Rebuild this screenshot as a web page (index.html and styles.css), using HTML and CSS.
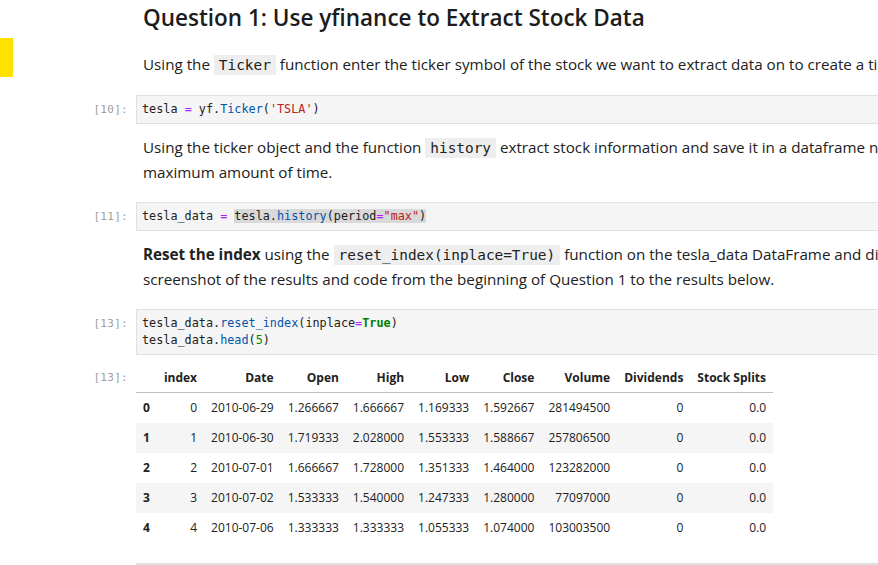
FILE: index.html
```html
<!DOCTYPE html>
<html>
<head>
<meta charset="utf-8">
<link rel="stylesheet" href="styles.css">
</head>
<body>
<div class="notebook">
  <div class="cell md first">
    <div class="gutter"><div class="marker"></div></div>
    <div class="content">
      <h2>Question 1: Use yfinance to Extract Stock Data</h2>
      <p>Using the <code>Ticker</code> function enter the ticker symbol of the stock we want to extract data on to create a ticker object. The stock is Tesla and its ticker symbol is <code>TSLA</code>.</p>
    </div>
  </div>

  <div class="cell code">
    <div class="prompt">[10]:</div>
    <div class="input"><pre>tesla <span class="op">=</span> yf.<span class="pr">Ticker</span>(<span class="st">'TSLA'</span>)</pre></div>
  </div>

  <div class="cell md">
    <div class="gutter"></div>
    <div class="content">
      <p>Using the ticker object and the function <code>history</code> extract stock information and save it in a dataframe named <code>tesla_data</code>. Set the <code>period</code> parameter to <code>max</code> so we get information for the<br>maximum amount of time.</p>
    </div>
  </div>

  <div class="cell code">
    <div class="prompt">[11]:</div>
    <div class="input"><pre>tesla_data <span class="op">=</span> <span class="sel">tesla.<span class="pr">history</span>(period<span class="op">=</span><span class="st">"max"</span>)</span></pre></div>
  </div>

  <div class="cell md">
    <div class="gutter"></div>
    <div class="content">
      <p><strong>Reset the index</strong> using the <code>reset_index(inplace=True)</code> function on the tesla_data DataFrame and display the first five rows of the <code>tesla_data</code> dataframe using the <code>head</code> function. Take a<br>screenshot of the results and code from the beginning of Question 1 to the results below.</p>
    </div>
  </div>

  <div class="cell code">
    <div class="prompt">[13]:</div>
    <div class="input"><pre>tesla_data.<span class="pr">reset_index</span>(inplace<span class="op">=</span><span class="kw">True</span>)
tesla_data.<span class="pr">head</span>(<span class="nm">5</span>)</pre></div>
  </div>

  <div class="cell output">
    <div class="prompt out">[13]:</div>
    <div class="result">
      <table class="df">
        <thead>
          <tr><th></th><th>index</th><th>Date</th><th>Open</th><th>High</th><th>Low</th><th>Close</th><th>Volume</th><th>Dividends</th><th>Stock Splits</th></tr>
        </thead>
        <tbody>
          <tr><th>0</th><td>0</td><td>2010-06-29</td><td>1.266667</td><td>1.666667</td><td>1.169333</td><td>1.592667</td><td>281494500</td><td>0</td><td>0.0</td></tr>
          <tr><th>1</th><td>1</td><td>2010-06-30</td><td>1.719333</td><td>2.028000</td><td>1.553333</td><td>1.588667</td><td>257806500</td><td>0</td><td>0.0</td></tr>
          <tr><th>2</th><td>2</td><td>2010-07-01</td><td>1.666667</td><td>1.728000</td><td>1.351333</td><td>1.464000</td><td>123282000</td><td>0</td><td>0.0</td></tr>
          <tr><th>3</th><td>3</td><td>2010-07-02</td><td>1.533333</td><td>1.540000</td><td>1.247333</td><td>1.280000</td><td>77097000</td><td>0</td><td>0.0</td></tr>
          <tr><th>4</th><td>4</td><td>2010-07-06</td><td>1.333333</td><td>1.333333</td><td>1.055333</td><td>1.074000</td><td>103003500</td><td>0</td><td>0.0</td></tr>
        </tbody>
      </table>
    </div>
  </div>

  <div class="cell separator">
    <div class="gutter"></div>
    <div class="rule"></div>
  </div>
</div>
</body>
</html>
```

FILE: styles.css
```css
html, body {
  margin: 0;
  padding: 0;
  background: #ffffff;
  overflow: hidden;
}

body {
  font-family: "Open Sans", "Noto Sans", sans-serif;
  color: #212121;
}

.notebook {
  width: 1400px;
}

.cell {
  display: flex;
  align-items: flex-start;
}

.gutter {
  width: 136px;
  flex: none;
}

.marker {
  width: 13px;
  height: 39px;
  margin-top: 38px;
  background: #ffe100;
}

.md .content {
  flex: 1;
  padding-left: 7px;
}

.md {
  margin-top: 11px;
}

.md.first {
  margin-top: 0;
}

h2 {
  margin: 0;
  padding-top: 3px;
  font-size: 22.5px;
  line-height: 30px;
  font-weight: 600;
  color: #1c1c1c;
}

p {
  margin: 19px 0 0;
  font-size: 15.2px;
  line-height: 24px;
  white-space: nowrap;
}

.md:not(.first) p {
  margin-top: 0;
}

code {
  font-family: "DejaVu Sans Mono", monospace;
  font-size: 14.4px;
  background: #eeeeee;
  padding: 2px 5px;
  color: #212121;
}

strong {
  font-weight: 700;
}

.code {
  margin-top: 18px;
}

.prompt {
  width: 128px;
  padding-right: 8px;
  flex: none;
  text-align: right;
  font-family: "DejaVu Sans Mono", monospace;
  font-size: 11px;
  line-height: 17px;
  padding-top: 6px;
  color: #9e9e9e;
  letter-spacing: 0.3px;
}

.input {
  flex: 1;
  background: #f5f5f5;
  border: 1px solid #e0e0e0;
  padding: 5px;
}

pre {
  margin: 0;
  font-family: "DejaVu Sans Mono", monospace;
  font-size: 11.8px;
  line-height: 17px;
  color: #212121;
}

.op { color: #aa22ff; }
.st { color: #ba2121; }
.pr { color: #0055aa; }
.kw { color: #008000; font-weight: bold; }
.nm { color: #008800; }
.sel { background: #d9d9d9; }

.output {
  margin-top: 9px;
}

.prompt.out {
  padding-top: 5px;
}

.df {
  border-collapse: collapse;
  font-size: 12px;
  line-height: 16px;
  color: #212121;
}

.df th, .df td {
  padding: 7px 7px;
  text-align: right;
  white-space: nowrap;
}

.df thead th {
  padding: 6px 7px;
  font-weight: 700;
  border-bottom: 1px solid #bdbdbd;
}

.df tbody th {
  font-weight: 700;
  text-align: left;
  padding-left: 7px;
}

.df tbody tr:nth-child(even) {
  background: #f5f5f5;
}

.separator {
  margin-top: 20px;
}

.rule {
  flex: 1;
  height: 2px;
  background: #e0e0e0;
}
```
